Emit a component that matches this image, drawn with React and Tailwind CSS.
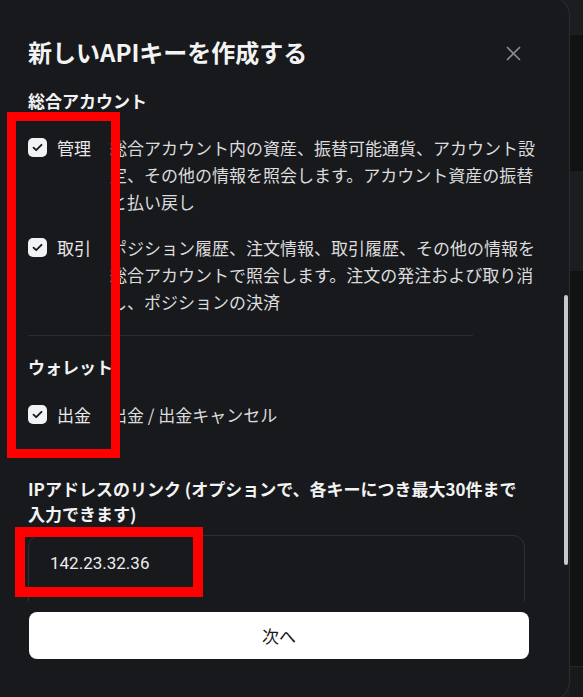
import React from "react";

const font = { fontFamily: '"Noto Sans CJK JP", "Noto Sans", sans-serif' };

const Check = () => (
  <div className="w-[19px] h-[19px] rounded-[5px] bg-[#f2f3f5] flex items-center justify-center">
    <svg width="11" height="9" viewBox="0 0 11 9" fill="none">
      <path d="M1.5 4.6L4.2 7.2L9.5 1.8" stroke="#17181b" strokeWidth="1.8" strokeLinecap="round" strokeLinejoin="round" />
    </svg>
  </div>
);

const PermRow = ({ label, lines }) => (
  <div className="flex items-start">
    <div className="h-[27px] flex items-center">
      <Check />
    </div>
    <div className="ml-[10px] w-[53px] text-[17px] leading-[27px] text-[#e8e8e8]">{label}</div>
    <div className="flex-1 text-[17px] leading-[27px] text-[#dcdcdc] whitespace-nowrap">
      {lines.map((l, i) => (
        <div key={i}>{l}</div>
      ))}
    </div>
  </div>
);

const App = () => {
  return (
    <div className="relative w-[583px] h-[697px] overflow-hidden bg-[#1c1d20] flex" style={font}>
      {/* modal */}
      <div className="relative -mt-[4px] w-[570px] h-[705px] shrink-0 bg-[#18191c] border-r border-t border-b border-[#2b2c30] rounded-r-[20px] flex flex-col">
        <div className="h-[88px] shrink-0 pl-[28px] pr-[48px] pt-[39px] flex justify-between items-start">
          <h1 className="text-[24px] leading-[32px] font-bold text-[#f3f3f3]">新しいAPIキーを作成する</h1>
          <svg className="mt-[10px]" width="15" height="15" viewBox="0 0 15 15" fill="none">
            <path d="M1.5 1.5L13.5 13.5M13.5 1.5L1.5 13.5" stroke="#8b8c8f" strokeWidth="1.7" strokeLinecap="round" />
          </svg>
        </div>

        <div className="h-[516px] shrink-0 overflow-hidden pl-[28px] pr-[30px] pt-[4px]">
          <div className="text-[17px] leading-[24px] font-bold text-[#f3f3f3]">総合アカウント</div>
          <div className="mt-[21px] flex flex-col gap-[19px]">
            <PermRow
              label="管理"
              lines={[
                "総合アカウント内の資産、振替可能通貨、アカウント設",
                "定、その他の情報を照会します。アカウント資産の振替",
                "と払い戻し",
              ]}
            />
            <PermRow
              label="取引"
              lines={[
                "ポジション履歴、注文情報、取引履歴、その他の情報を",
                "総合アカウントで照会します。注文の発注および取り消",
                "し、ポジションの決済",
              ]}
            />
          </div>
          <div className="mt-[20px] w-[445px] h-px bg-[#2a2b2f]" />
          <div className="mt-[19px] text-[17px] leading-[24px] font-bold text-[#f3f3f3]">ウォレット</div>
          <div className="mt-[22px]">
            <PermRow label="出金" lines={["出金 / 出金キャンセル"]} />
          </div>
          <div className="mt-[48px] text-[17px] leading-[25px] font-bold text-[#f3f3f3]">
            <div>IPアドレスのリンク (オプションで、各キーにつき最大30件まで</div>
            <div>入力できます)</div>
          </div>
          <div className="mt-[9px] w-[497px] h-[110px] rounded-[12px] border border-[#2e2f33] pl-[21px] pt-[15px] text-[17px] leading-[22px] text-[#ececec]">
            <span style={{ fontFamily: 'Roboto, "Noto Sans", sans-serif' }}>142.23.32.36</span>
          </div>
        </div>

        <div className="pt-[11px] pl-[29px]">
          <button className="w-[500px] h-[47px] rounded-[8px] bg-white text-[17px] text-[#1a1a1a] flex items-center justify-center">
            次へ
          </button>
        </div>

        {/* scrollbar */}
        <div className="absolute left-[564px] top-[298px] w-[4px] h-[270px] rounded-full bg-[#c6cacb]" />
      </div>

      {/* background behind modal */}
      <div className="flex-1 flex flex-col">
        <div className="h-[35px]" />
        <div className="h-[136px] bg-[#121213]" />
        <div className="h-[100px]" />
        <div className="h-[396px] bg-[#121213] border-b border-[#26272a]" />
        <div className="flex-1 bg-[#18191b]" />
      </div>

      {/* annotation frames */}
      <div className="absolute left-[7px] top-[112px] w-[113px] h-[346px] border-[9px] border-[#ff0000]" />
      <div className="absolute left-[15px] top-[527px] w-[188px] h-[70px] border-[10px] border-[#ff0000]" />
    </div>
  );
};

export default App;
